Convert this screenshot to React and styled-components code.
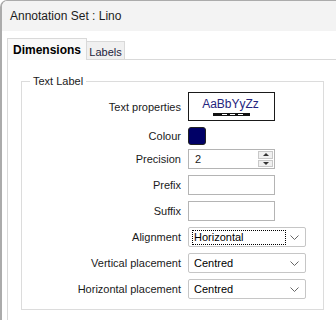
import styled, { createGlobalStyle } from "styled-components"

const Global = createGlobalStyle`
    html, body {
        margin: 0;
        padding: 0;
        background: #fff;
    }
    #root {
        width: 336px;
        height: 320px;
        overflow: hidden;
    }
`

const Window = styled.div`
    width: 336px;
    height: 320px;
    box-sizing: border-box;
    border-left: 2px solid #ababab;
    border-top: 1px solid #ababab;
    border-top-left-radius: 7px;
    background: #fff;
    font-family: "Liberation Sans", Arial, sans-serif;
    color: #1a1a1a;
    overflow: hidden;
`

const TitleBar = styled.div`
    height: 30px;
    background: #f3f3f3;
    display: flex;
    align-items: center;
    padding-left: 8px;
    font-size: 12px;
    color: #1b1b1b;
`

const Body = styled.div`
    padding: 7px 0 0 5px;
`

const TabStrip = styled.div`
    display: flex;
    align-items: flex-end;
    height: 21px;
    border-bottom: 1px solid #d9d9d9;
`

const Tab = styled.div`
    box-sizing: border-box;
    display: flex;
    align-items: center;
    justify-content: center;
    border: 1px solid #d9d9d9;
    border-bottom: none;
    height: ${p => (p.$active ? "22px" : "18px")};
    width: ${p => p.$w}px;
    margin-bottom: ${p => (p.$active ? "-1px" : "0")};
    background: ${p => (p.$active ? "#f9f9f9" : "#f0f0f0")};
    font-size: ${p => (p.$active ? "12px" : "11px")};
    font-weight: ${p => (p.$active ? "bold" : "normal")};
    color: ${p => (p.$active ? "#000" : "#1c1c3c")};
    padding-top: ${p => (p.$active ? "0" : "2px")};
    ${p => !p.$active && "border-left: none;"}
`

const Panel = styled.div`
    border-left: 1px solid #d9d9d9;
    padding: 14px 0 30px 13px;
`

const GroupBox = styled.fieldset`
    margin: 0;
    width: 303px;
    box-sizing: border-box;
    border: 1px solid #dcdcdc;
    padding: 4px 0 10px 0;
`

const Legend = styled.legend`
    margin-left: 8px;
    padding: 0 3px;
    font-size: 11px;
    line-height: 14px;
`

const Rows = styled.div`
    display: flex;
    flex-direction: column;
    gap: 6px;
`

const Row = styled.div`
    display: grid;
    grid-template-columns: 159px auto;
    column-gap: 7px;
    align-items: center;
    height: ${p => p.$h || 20}px;
`

const Label = styled.div`
    text-align: right;
    font-size: 11px;
    white-space: nowrap;
`

const Preview = styled.div`
    box-sizing: border-box;
    width: 87px;
    height: 29px;
    border: 1px solid #1a1a1a;
    display: flex;
    flex-direction: column;
    align-items: center;
    justify-content: center;
    gap: 2px;
`

const Sample = styled.div`
    font-size: 12px;
    line-height: 14px;
    color: #24247e;
    margin-left: -2px;
`

const Swatch = styled.div`
    box-sizing: border-box;
    width: 18px;
    height: 18px;
    border: 1px solid #222;
    border-radius: 3px;
    background: #000066;
`

const TextBox = styled.div`
    box-sizing: border-box;
    width: 87px;
    height: 20px;
    border: 1px solid #b4b4b4;
    display: flex;
    align-items: center;
    padding-left: 6px;
    font-size: 11px;
    position: relative;
`

const Spinner = styled.div`
    position: absolute;
    right: 1px;
    top: 1px;
    bottom: 1px;
    width: 15px;
    display: flex;
    flex-direction: column;
    gap: 1px;
`

const SpinButton = styled.div`
    flex: 1;
    background: #f0f0f0;
    border: 1px solid #c8c8c8;
    display: flex;
    align-items: center;
    justify-content: center;

    &::after {
        content: "";
        border-left: 3px solid transparent;
        border-right: 3px solid transparent;
        ${p => (p.$down ? "border-top: 3px solid #333;" : "border-bottom: 3px solid #333;")}
    }
`

const Select = styled.div`
    box-sizing: border-box;
    width: 118px;
    height: 20px;
    border: 1px solid #c6c6c6;
    border-radius: 2px;
    display: flex;
    align-items: center;
    padding: 0 6px 0 3px;
    font-size: 11px;
    color: #000;
`

const SelectText = styled.div`
    flex: 1;
    height: 15px;
    display: flex;
    align-items: center;
    padding-left: 1px;
    box-sizing: border-box;
    border: 1px dotted ${p => (p.$focus ? "#000" : "transparent")};
    margin-right: 4px;
`

const Chevron = () => (
    <svg width="9" height="5" viewBox="0 0 9 5">
        <path d="M0.5 0.5 L4.5 4.5 L8.5 0.5" fill="none" stroke="#666" strokeWidth="1" />
    </svg>
)

const LineStyle = () => (
    <svg width="37" height="3" viewBox="0 0 37 3">
        <rect x="0" y="0" width="37" height="3" fill="#111" />
        <rect x="9" y="1" width="5" height="1" fill="#fff" />
        <rect x="17" y="1" width="5" height="1" fill="#fff" />
        <rect x="25" y="1" width="5" height="1" fill="#fff" />
    </svg>
)

const App = () => {
    return (
        <Window>
            <Global />
            <TitleBar>Annotation Set : Lino</TitleBar>
            <Body>
                <TabStrip>
                    <Tab $active $w={80}>Dimensions</Tab>
                    <Tab $w={38}>Labels</Tab>
                </TabStrip>
                <Panel>
                    <GroupBox>
                        <Legend>Text Label</Legend>
                        <Rows>
                            <Row $h={29}>
                                <Label>Text properties</Label>
                                <Preview>
                                    <Sample>AaBbYyZz</Sample>
                                    <LineStyle />
                                </Preview>
                            </Row>
                            <Row $h={16}>
                                <Label>Colour</Label>
                                <Swatch />
                            </Row>
                            <Row>
                                <Label>Precision</Label>
                                <TextBox>
                                    2
                                    <Spinner>
                                        <SpinButton />
                                        <SpinButton $down />
                                    </Spinner>
                                </TextBox>
                            </Row>
                            <Row>
                                <Label>Prefix</Label>
                                <TextBox />
                            </Row>
                            <Row>
                                <Label>Suffix</Label>
                                <TextBox />
                            </Row>
                            <Row>
                                <Label>Alignment</Label>
                                <Select>
                                    <SelectText $focus>Horizontal</SelectText>
                                    <Chevron />
                                </Select>
                            </Row>
                            <Row>
                                <Label>Vertical placement</Label>
                                <Select>
                                    <SelectText>Centred</SelectText>
                                    <Chevron />
                                </Select>
                            </Row>
                            <Row>
                                <Label>Horizontal placement</Label>
                                <Select>
                                    <SelectText>Centred</SelectText>
                                    <Chevron />
                                </Select>
                            </Row>
                        </Rows>
                    </GroupBox>
                </Panel>
            </Body>
        </Window>
    )
}

export default App
